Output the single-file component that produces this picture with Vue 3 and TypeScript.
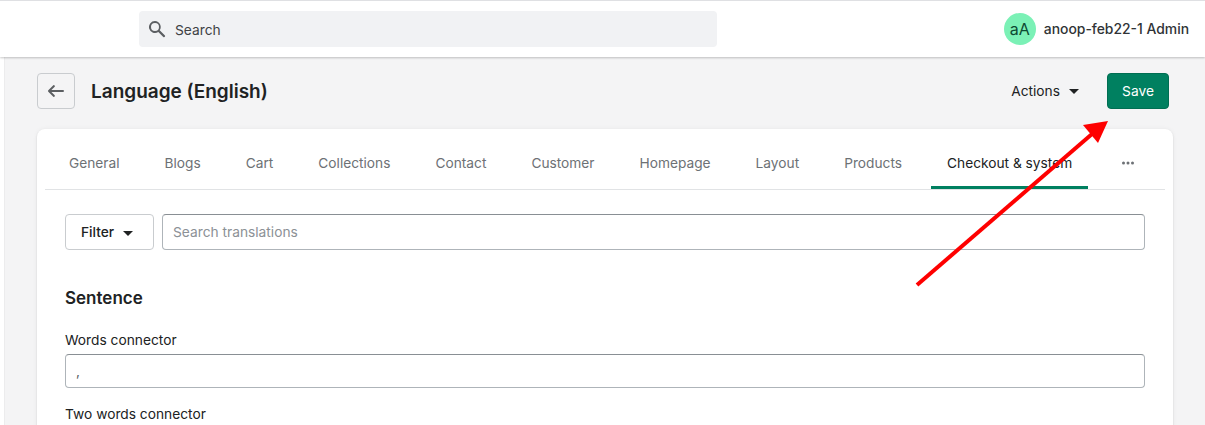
<script setup lang="ts">
const tabs: string[] = ['General', 'Blogs', 'Cart', 'Collections', 'Contact', 'Customer', 'Homepage', 'Layout', 'Products', 'Checkout & system']
</script>

<template>
  <div class="page">
    <header class="topbar">
      <div class="search">
        <svg class="search-icon" width="20" height="20" viewBox="0 0 20 20"><path fill="#5c5f62" d="M8 12a4 4 0 1 1 0-8 4 4 0 0 1 0 8zm9.7 4.3-5-5A6 6 0 0 0 8 2a6 6 0 1 0 3.3 11l5 5a1 1 0 0 0 1.4-1.7z"/></svg>
        <span class="search-text">Search</span>
      </div>
      <div class="user">
        <span class="avatar">aA</span>
        <span class="user-name">anoop-feb22-1 Admin</span>
      </div>
    </header>
    <div class="body">
      <aside class="rail"></aside>
      <main class="main">
        <div class="head">
          <button class="back" aria-label="Back">
            <svg width="20" height="20" viewBox="0 0 20 20"><path fill="#5c5f62" d="M17 9H5.4l3.3-3.3a1 1 0 0 0-1.4-1.4l-5 5a1 1 0 0 0 0 1.4l5 5a1 1 0 0 0 1.4-1.4L5.4 11H17a1 1 0 1 0 0-2z"/></svg>
          </button>
          <h1>Language (English)</h1>
          <div class="actions"><span>Actions</span><i class="caret"></i></div>
          <button class="save">Save</button>
        </div>
        <section class="card">
          <nav class="tabs">
            <span v-for="(t, i) in tabs" :key="t" class="tab" :class="{ active: i === tabs.length - 1 }">{{ t }}</span>
            <span class="tab more">
              <svg width="16" height="16" viewBox="0 0 16 16"><circle cx="3.5" cy="8" r="1.5" fill="#6d7175"/><circle cx="8" cy="8" r="1.5" fill="#6d7175"/><circle cx="12.5" cy="8" r="1.5" fill="#6d7175"/></svg>
            </span>
          </nav>
          <div class="content">
            <div class="filter-row">
              <button class="filter"><span>Filter</span><i class="caret"></i></button>
              <div class="field grow placeholder">Search translations</div>
            </div>
            <h2>Sentence</h2>
            <label>Words connector</label>
            <div class="field value">,</div>
            <label class="second">Two words connector</label>
          </div>
        </section>
      </main>
    </div>
    <svg class="arrow" width="1205" height="425" viewBox="0 0 1205 425">
      <line x1="917" y1="285" x2="1092" y2="134" stroke="#fe0000" stroke-width="4"/>
      <polygon points="1108,121 1098,143 1083,125" fill="#fe0000"/>
    </svg>
  </div>
</template>

<style scoped>
.page { position: relative; width: 1205px; height: 425px; overflow: hidden; background: #f4f4f5; font-family: Inter, "Liberation Sans", sans-serif; font-size: 13.75px; color: #202223; }
.topbar { display: flex; align-items: center; justify-content: space-between; box-sizing: border-box; height: 57px; padding: 0 16px 0 139px; background: #fff; border-top: 1px solid #dfe0e3; box-shadow: 0 1px 2px rgba(0,0,0,.22); position: relative; }
.search { display: flex; align-items: center; gap: 8px; box-sizing: border-box; width: 578px; height: 36px; padding-left: 8px; border-radius: 4px; background: #f1f2f4; color: #3f4245; }
.search-icon { flex: none; }
.search-text { padding-top: 2px; }
.user { display: flex; align-items: center; gap: 8px; font-weight: 500; color: #303336; font-size: 13.9px; }
.avatar { display: flex; align-items: center; justify-content: center; width: 32px; height: 32px; border-radius: 50%; background: #7bf1b6; color: #0d4a33; font-size: 16px; font-weight: 400; }
.body { display: flex; height: 368px; }
.rail { width: 4px; background: #fff; border-right: 1px solid #ececed; flex: none; }
.main { flex: 1; padding: 16px 32px 0 32px; min-width: 0; }
.head { display: flex; align-items: center; height: 36px; }
.back { display: flex; align-items: center; justify-content: center; box-sizing: border-box; width: 38px; height: 36px; padding: 0; background: transparent; border: 1px solid #c9cccf; border-radius: 4px; }
h1 { margin: 0 0 0 16px; padding-top: 2px; font-size: 19px; line-height: 28px; font-weight: 600; color: #202223; }
.actions { display: flex; align-items: center; gap: 9px; margin-left: auto; margin-right: 28px; padding-bottom: 1px; color: #202223; }
.caret { display: block; width: 0; height: 0; border-left: 5px solid transparent; border-right: 5px solid transparent; border-top: 5px solid #202223; margin-top: 2px; }
.save { box-sizing: border-box; width: 62px; height: 36px; margin-right: 4px; padding: 0; border: 1px solid #006e52; border-radius: 4px; background: #008060; color: #fff; font: 400 13.75px Inter, "Liberation Sans", sans-serif; }
.card { box-sizing: border-box; width: 1136px; height: 320px; margin-top: 20px; padding: 0 8px; background: #fff; border-radius: 8px; box-shadow: 0 0 5px rgba(23,24,24,.05), 0 1px 2px rgba(0,0,0,.12); }
.tabs { display: flex; height: 61px; padding-left: 8px; gap: 13px; border-bottom: 1px solid #e1e3e5; box-sizing: border-box; font-size: 13.72px; }
.tab { display: flex; align-items: center; padding: 7px 16px 0; height: 60px; box-sizing: border-box; color: #6d7175; white-space: nowrap; }
.tab.active { color: #202223; border-bottom: 3px solid #008060; padding-top: 10px; }
.tab.more { padding: 7px 0 0 19px; }
.content { padding: 24px 20px 0; }
.filter-row { display: flex; gap: 8px; }
.filter { display: flex; align-items: center; gap: 9px; box-sizing: border-box; width: 89px; height: 36px; padding: 0 0 0 15px; background: #fff; border: 1px solid #c9cccf; border-radius: 4px; color: #202223; font: 500 13.75px Inter, "Liberation Sans", sans-serif; }
.field { display: flex; align-items: center; box-sizing: border-box; height: 36px; padding: 0 10px 1px; background: #fff; border: 1px solid #aeb4b9; border-top-color: #898f94; border-radius: 4px; }
.grow { flex: 1; }
.placeholder { color: #8c9196; }
h2 { margin: 36px 0 0; font-size: 17px; line-height: 24px; font-weight: 600; color: #202223; }
label { display: block; margin-top: 20px; line-height: 20px; color: #202223; }
.value { height: 34px; margin-top: 4px; color: #5c5f62; }
.second { margin-top: 16px; }
.arrow { position: absolute; left: 0; top: 0; pointer-events: none; }
</style>
